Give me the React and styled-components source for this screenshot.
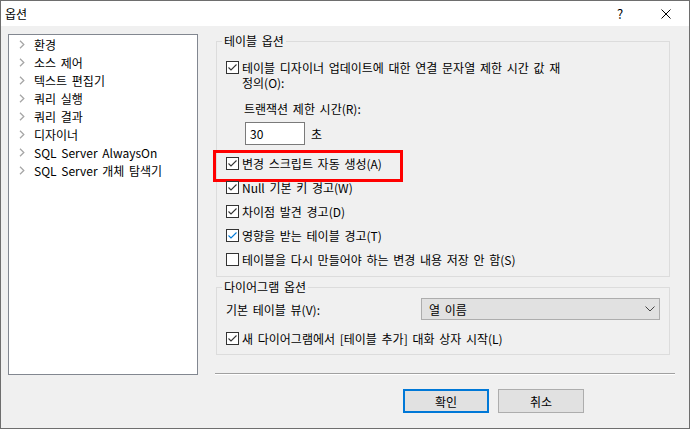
import React from "react";
import styled, { createGlobalStyle } from "styled-components";

const GlobalStyle = createGlobalStyle`
  html, body {
    margin: 0;
    padding: 0;
    background: #fff;
  }
  body {
    font-family: "Noto Sans CJK KR", "Noto Sans", sans-serif;
    font-size: 12px;
    word-spacing: 2px;
    color: #000;
  }
  * {
    box-sizing: border-box;
  }
`;

const Window = styled.div`
  width: 690px;
  height: 429px;
  border: 1px solid #6e6e6e;
  background: #f0f0f0;
  display: flex;
  flex-direction: column;
`;

const TitleBar = styled.div`
  height: 25px;
  background: #fff;
  display: flex;
  align-items: center;
  padding-left: 4px;
`;

const Title = styled.div`
  flex: 1;
  line-height: 16px;
`;

const CaptionButton = styled.div`
  width: 46px;
  height: 25px;
  display: flex;
  align-items: center;
  justify-content: center;
  font-size: 13px;
`;

const Body = styled.div`
  flex: 1;
  display: flex;
  align-items: flex-start;
  padding: 8px 0 0 7px;
`;

const Tree = styled.ul`
  width: 190px;
  height: 341px;
  margin: 0;
  padding: 0;
  list-style: none;
  background: #fff;
  border: 1px solid #828790;
`;

const TreeItem = styled.li`
  height: 18px;
  display: flex;
  align-items: center;
  gap: 9px;
  padding-left: 10px;
  white-space: nowrap;
`;

const RightColumn = styled.div`
  width: 460px;
  margin-left: 17px;
  display: flex;
  flex-direction: column;
`;

const Group = styled.fieldset`
  margin: ${(p) => (p.$gap ? "3px" : "0")} 5px 0 1px;
  padding: ${(p) => p.$pt}px 9px ${(p) => p.$pb}px 9px;
  border: 1px solid #dcdcdc;
  min-width: 0;
`;

const Legend = styled.legend`
  padding: 0 2px;
  margin-left: -4px;
  line-height: 14px;
`;

const CheckRow = styled.div`
  position: relative;
  display: flex;
  align-items: ${(p) => (p.$multi ? "flex-start" : "center")};
  gap: 3px;
  height: ${(p) => (p.$multi ? "auto" : "24px")};
  line-height: 15px;
  white-space: nowrap;

  ${(p) =>
    p.$highlight &&
    `
    &::after {
      content: "";
      position: absolute;
      left: -13px;
      top: -1px;
      width: 184px;
      height: 26px;
      border: 3px solid #f00;
      pointer-events: none;
    }
  `}
`;

const MultiLabel = styled.div`
  display: flex;
  flex-direction: column;
`;

const LabelLine = styled.span`
  height: 15px;
  line-height: 15px;
`;

const Box = styled.span`
  flex: none;
  width: 13px;
  height: 13px;
  margin-top: ${(p) => p.$offset || 0}px;
  border: 1px solid #333;
  background: #fff;
  display: flex;
`;

const Indent = styled.div`
  margin-left: 18px;
  display: flex;
  flex-direction: column;
`;

const FieldLabel = styled.div`
  margin-top: 11px;
  line-height: 15px;
`;

const InputRow = styled.div`
  margin-top: 6px;
  margin-left: 1px;
  display: flex;
  align-items: center;
  gap: 6px;
  margin-bottom: 6px;
`;

const NumberInput = styled.div`
  width: 60px;
  height: 23px;
  border: 1px solid #7a7a7a;
  background: #fff;
  padding-left: 4px;
  display: flex;
  align-items: center;
`;

const SelectRow = styled.div`
  height: 22px;
  display: flex;
  align-items: center;
  margin-bottom: 6px;
`;

const Select = styled.div`
  margin-left: auto;
  width: 239px;
  height: 22px;
  border: 1px solid #adadad;
  background: #e1e1e1;
  display: flex;
  align-items: center;
  justify-content: space-between;
  padding: 0 4px 0 7px;
`;

const Separator = styled.div`
  margin-top: 18px;
  height: 2px;
  border-top: 1px solid #a0a0a0;
  border-bottom: 1px solid #fff;
`;

const ButtonRow = styled.div`
  margin-top: 14px;
  display: flex;
  justify-content: flex-end;
  gap: 9px;
  padding-right: 91px;
`;

const Button = styled.div`
  width: 86px;
  height: 24px;
  background: #e1e1e1;
  border: ${(p) => (p.$default ? "2px solid #0078d7" : "1px solid #adadad")};
  display: flex;
  align-items: center;
  justify-content: center;
`;

const Chevron = () => (
  <svg width="6" height="9" viewBox="0 0 6 9">
    <polyline points="1,0.8 4.8,4.5 1,8.2" fill="none" stroke="#a6a6a6" strokeWidth="1.3" />
  </svg>
);

const CheckBox = ({ checked, blue, offset }) => (
  <Box $offset={offset}>
    {checked && (
      <svg width="11" height="11" viewBox="0 0 11 11">
        <polyline
          points="1.5,5.5 4,8 9.5,2.5"
          fill="none"
          stroke={blue ? "#0078d7" : "#333"}
          strokeWidth="1.1"
        />
      </svg>
    )}
  </Box>
);

const treeItems = [
  "환경",
  "소스 제어",
  "텍스트 편집기",
  "쿼리 실행",
  "쿼리 결과",
  "디자이너",
  "SQL Server AlwaysOn",
  "SQL Server 개체 탐색기",
];

const App = () => {
  return (
    <>
      <GlobalStyle />
      <Window>
        <TitleBar>
          <Title>옵션</Title>
          <CaptionButton>?</CaptionButton>
          <CaptionButton>
            <svg width="10" height="10" viewBox="0 0 10 10">
              <path d="M0.5 0.5 L9.5 9.5 M9.5 0.5 L0.5 9.5" stroke="#000" strokeWidth="1" />
            </svg>
          </CaptionButton>
        </TitleBar>
        <Body>
          <Tree>
            {treeItems.map((item) => (
              <TreeItem key={item}>
                <Chevron />
                {item}
              </TreeItem>
            ))}
          </Tree>
          <RightColumn>
            <Group $pt={12} $pb={5}>
              <Legend>테이블 옵션</Legend>
              <CheckRow $multi>
                <CheckBox checked offset={1} />
                <MultiLabel>
                  <LabelLine>테이블 디자이너 업데이트에 대한 연결 문자열 제한 시간 값 재</LabelLine>
                  <LabelLine>정의(O):</LabelLine>
                </MultiLabel>
              </CheckRow>
              <Indent>
                <FieldLabel>트랜잭션 제한 시간(R):</FieldLabel>
                <InputRow>
                  <NumberInput>30</NumberInput>
                  <span>초</span>
                </InputRow>
              </Indent>
              <CheckRow $highlight>
                <CheckBox checked />
                변경 스크립트 자동 생성(A)
              </CheckRow>
              <CheckRow>
                <CheckBox checked />
                Null 기본 키 경고(W)
              </CheckRow>
              <CheckRow>
                <CheckBox checked />
                차이점 발견 경고(D)
              </CheckRow>
              <CheckRow>
                <CheckBox checked blue />
                영향을 받는 테이블 경고(T)
              </CheckRow>
              <CheckRow>
                <CheckBox />
                테이블을 다시 만들어야 하는 변경 내용 저장 안 함(S)
              </CheckRow>
            </Group>
            <Group $gap $pt={4} $pb={4}>
              <Legend>다이어그램 옵션</Legend>
              <SelectRow>
                기본 테이블 뷰(V):
                <Select>
                  열 이름
                  <svg width="10" height="6" viewBox="0 0 10 6">
                    <polyline points="0.5,0.5 5,5 9.5,0.5" fill="none" stroke="#444" strokeWidth="1" />
                  </svg>
                </Select>
              </SelectRow>
              <CheckRow>
                <CheckBox checked />
                새 다이어그램에서 [테이블 추가] 대화 상자 시작(L)
              </CheckRow>
            </Group>
            <Separator />
            <ButtonRow>
              <Button $default>확인</Button>
              <Button>취소</Button>
            </ButtonRow>
          </RightColumn>
        </Body>
      </Window>
    </>
  );
};

export default App;
